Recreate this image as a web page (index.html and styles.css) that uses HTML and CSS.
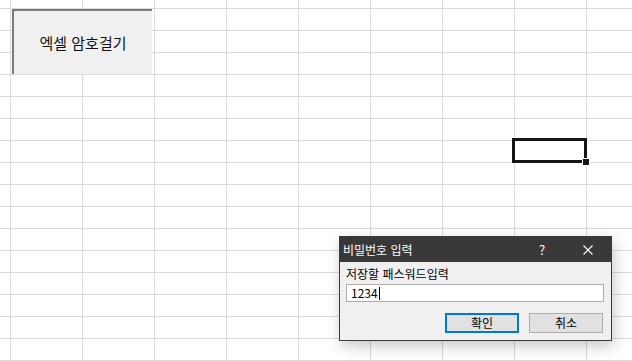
FILE: index.html
```html
<!DOCTYPE html>
<html lang="ko">
<head>
    <meta charset="UTF-8">
    <title>엑셀 암호걸기</title>
    <link rel="stylesheet" href="styles.css">
</head>
<body>
    <div class="sheet">
        <button class="form-button">엑셀 암호걸기</button>
        <div class="selected-cell"><span class="fill-handle"></span></div>

        <div class="dialog">
            <div class="dialog-title">
                <span class="title-text">비밀번호 입력</span>
                <div class="caption-buttons">
                    <span class="caption-btn">?</span>
                    <span class="caption-btn">
                        <svg width="10" height="10" viewBox="0 0 10 10">
                            <path d="M0.5 0.5 L9.5 9.5 M9.5 0.5 L0.5 9.5" stroke="#fff" stroke-width="1.1" fill="none"/>
                        </svg>
                    </span>
                </div>
            </div>
            <div class="dialog-body">
                <div class="prompt">저장할 패스워드입력</div>
                <div class="text-input">1234<span class="caret"></span></div>
                <div class="dialog-actions">
                    <button class="dlg-btn default">확인</button>
                    <button class="dlg-btn">취소</button>
                </div>
            </div>
        </div>
    </div>
</body>
</html>
```

FILE: styles.css
```css
body {
    margin: 0;
    font-family: "Noto Sans CJK KR", "Liberation Sans", sans-serif;
    background: #fff;
}
.sheet {
    position: relative;
    width: 632px;
    height: 361px;
    overflow: hidden;
    background-color: #fff;
    background-image:
        linear-gradient(to right, #dadada 1px, transparent 1px),
        linear-gradient(to bottom, #dadada 1px, transparent 1px);
    background-size: 72px 22px;
    background-position: 10px 8px;
}
.form-button {
    position: absolute;
    left: 12px;
    top: 9px;
    width: 140px;
    height: 65px;
    box-sizing: border-box;
    border: none;
    border-top: 2px solid #7a7a7a;
    border-left: 2px solid #7a7a7a;
    background: #f0f0f0;
    font-family: inherit;
    font-size: 15px;
    color: #111;
    padding: 0;
}
.selected-cell {
    position: absolute;
    left: 512px;
    top: 138px;
    width: 75px;
    height: 25px;
    box-sizing: border-box;
    border: 3px solid #151515;
}
.fill-handle {
    position: absolute;
    left: 68px;
    top: 18px;
    width: 6px;
    height: 6px;
    background: #151515;
    outline: 1px solid #fff;
}
.dialog {
    position: absolute;
    left: 339px;
    top: 236px;
    width: 273px;
    height: 105px;
    box-sizing: border-box;
    border: 1px solid #3a3a3a;
    background: #f0f0f0;
    display: flex;
    flex-direction: column;
    box-shadow: 2px 5px 14px rgba(0, 0, 0, 0.22);
}
.dialog-title {
    height: 25px;
    background: #383838;
    color: #fff;
    display: flex;
    align-items: center;
    justify-content: space-between;
    font-size: 12px;
}
.title-text {
    padding-left: 3px;
}
.caption-buttons {
    display: flex;
    height: 100%;
}
.caption-btn {
    width: 46px;
    display: flex;
    align-items: center;
    justify-content: center;
    font-size: 13px;
}
.dialog-body {
    flex: 1;
    padding: 4px 7px 0 6px;
    font-size: 12px;
    color: #000;
}
.prompt {
    height: 16px;
    line-height: 16px;
}
.text-input {
    margin-top: 2px;
    height: 18px;
    box-sizing: border-box;
    border: 1px solid #acacac;
    background: #fff;
    padding-left: 4px;
    line-height: 16px;
    display: flex;
    align-items: center;
}
.caret {
    display: inline-block;
    width: 1px;
    height: 13px;
    background: #000;
    margin-left: 1px;
}
.dialog-actions {
    display: flex;
    justify-content: flex-end;
    gap: 10px;
    margin-top: 11px;
    padding-right: 1px;
}
.dlg-btn {
    width: 74px;
    height: 20px;
    box-sizing: border-box;
    border: 1px solid #adadad;
    background: #e1e1e1;
    font-family: inherit;
    font-size: 12px;
    color: #000;
    padding: 0;
    line-height: 16px;
}
.dlg-btn.default {
    border: 2px solid #0078d7;
}
```
